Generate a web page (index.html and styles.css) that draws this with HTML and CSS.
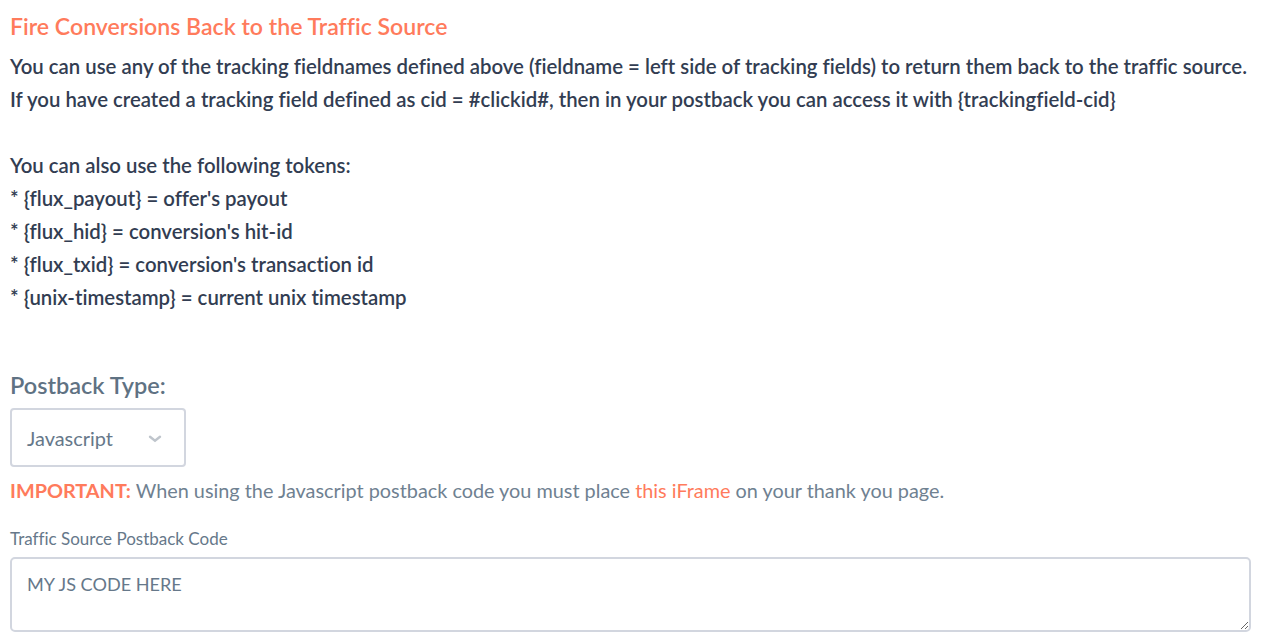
FILE: index.html
```html
<!DOCTYPE html>
<html>
<head>
<meta charset="utf-8">
<link rel="stylesheet" href="styles.css">
</head>
<body>
<div class="page">
  <h2 class="title">Fire Conversions Back to the Traffic Source</h2>
  <div class="info">
    <p>You can use any of the tracking fieldnames defined above (fieldname = left side of tracking fields) to return them back to the traffic source.</p>
    <p>If you have created a tracking field defined as cid = #clickid#, then in your postback you can access it with {trackingfield-cid}</p>
    <p class="blank">&nbsp;</p>
    <p>You can also use the following tokens:</p>
    <p>* {flux_payout} = offer's payout</p>
    <p>* {flux_hid} = conversion's hit-id</p>
    <p>* {flux_txid} = conversion's transaction id</p>
    <p>* {unix-timestamp} = current unix timestamp</p>
  </div>
  <div class="type-label">Postback Type:</div>
  <div class="select">
    <span>Javascript</span>
    <svg class="chev" width="14" height="8" viewBox="0 0 14 8"><path d="M2 1.8 L7 5.8 L12 1.8" fill="none" stroke="#bfc5cc" stroke-width="2.4" stroke-linecap="round"/></svg>
  </div>
  <p class="important"><strong>IMPORTANT:</strong> When using the Javascript postback code you must place <a href="#">this iFrame</a> on your thank you page.</p>
  <label class="field-label">Traffic Source Postback Code</label>
  <textarea class="code">MY JS CODE HERE</textarea>
</div>
</body>
</html>
```
FILE: styles.css
```css
html, body { margin: 0; padding: 0; background: #fff; }
body { font-family: "Lato", "Open Sans", sans-serif; font-variant-ligatures: none; }
.page { padding: 0 16px 0 10px; }
.title { margin: 0; padding-top: 11px; font-size: 23.1px; line-height: 30px; font-weight: 600; color: #ff7b5c; }
.info { margin-top: 9px; color: #323d52; font-size: 20.38px; font-weight: 600; }
.info p { margin: 0; line-height: 33px; white-space: nowrap; }
.type-label { margin-top: 56px; font-size: 23.5px; font-weight: 600; color: #5f7283; line-height: 30px; }
.select { margin-top: 8px; width: 176px; height: 59px; box-sizing: border-box; border: 2px solid #d2d6df; border-radius: 4px; display: flex; align-items: center; justify-content: space-between; padding: 0 22px 0 15px; color: #66788a; font-size: 19.9px; }
.chev { margin-top: 2px; }
.important { margin: 10px 0 0; font-size: 19.85px; color: #6f8191; line-height: 26px; white-space: nowrap; }
.important strong { color: #ff7b5c; font-weight: 700; }
.important a { color: #ff7b5c; text-decoration: none; }
.field-label { display: block; margin-top: 26px; font-size: 17px; color: #66788a; line-height: 20px; }
.code { display: block; margin-top: 8px; width: 1241px; height: 75px; box-sizing: border-box; border: 2px solid #d2d6df; border-radius: 5px; padding: 14px 15px; font-family: inherit; font-size: 18.1px; line-height: 22px; color: #66788a; resize: both; }
```
